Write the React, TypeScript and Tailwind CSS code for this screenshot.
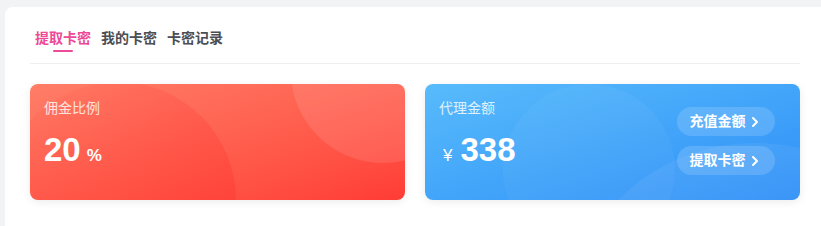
import { ChevronRight } from 'lucide-react';

const tabs = ['提取卡密', '我的卡密', '卡密记录'];

export default function App() {
  const active = 0;

  return (
    <div className="min-h-[226px] bg-[#f2f3f5] pt-[7px] pl-[5px] font-['Liberation_Sans','Noto_Sans_CJK_SC',sans-serif]">
      <div className="h-[219px] rounded-tl-lg bg-white pt-[21px] pl-[25px] pr-[21px]">
        {/* Tabs */}
        <div className="flex gap-[10px] border-b border-[#eeeff1] pl-[5px] pb-[11px]">
          {tabs.map((tab, i) => (
            <div key={tab} className="flex flex-col items-center">
              <span
                className={
                  i === active
                    ? 'text-[14px] leading-5 font-bold text-[#ec4a96]'
                    : 'text-[14px] leading-5 font-bold text-[#4b4e55]'
                }
              >
                {tab}
              </span>
              <span
                className={
                  i === active
                    ? 'mt-[2px] h-[2px] w-5 rounded-full bg-[#ec4a96]'
                    : 'mt-[2px] h-[2px] w-5'
                }
              />
            </div>
          ))}
        </div>

        {/* Cards */}
        <div className="mt-5 grid grid-cols-2 gap-5">
          {/* Commission */}
          <div className="relative h-[116px] overflow-hidden rounded-lg bg-gradient-to-br from-[#ff7d67] to-[#ff3b36] shadow-[0_2px_8px_rgba(0,0,0,0.08)]">
            <div className="absolute left-[-30px] top-[-2px] h-[236px] w-[236px] rounded-full bg-gradient-to-br from-[#ff4a40]/0 to-[#ff2a2a]/40" />
            <div className="absolute left-[261px] top-[-105px] h-[184px] w-[184px] rounded-full bg-white/10" />
            <div className="relative px-[14px] pt-[15px]">
              <p className="text-[14px] leading-[18px] text-white/80">佣金比例</p>
              <div className="mt-[15px] flex items-baseline text-white">
                <span className="text-[33px] leading-[36px] font-bold">20</span>
                <span className="ml-[6px] text-[17px] font-bold">%</span>
              </div>
            </div>
          </div>

          {/* Agent balance */}
          <div className="relative flex h-[116px] items-stretch justify-between overflow-hidden rounded-lg bg-gradient-to-br from-[#58bbfb] to-[#2f8ff7] shadow-[0_2px_8px_rgba(0,0,0,0.08)]">
            <div className="absolute left-[78px] top-0 h-[172px] w-[172px] rounded-full bg-white/[0.04]" />
            <div className="absolute left-[137px] top-[59px] h-[386px] w-[386px] rounded-full bg-white/[0.06]" />
            <div className="relative px-[14px] pt-[15px]">
              <p className="text-[14px] leading-[18px] text-white/80">代理金额</p>
              <div className="mt-[15px] flex items-baseline text-white">
                <span className="ml-[4px] text-[17px]">¥</span>
                <span className="ml-[8px] text-[33px] leading-[36px] font-bold">338</span>
              </div>
            </div>
            <div className="relative flex flex-col gap-[10px] pr-[25px] pt-[23px]">
              {['充值金额', '提取卡密'].map((label) => (
                <button
                  key={label}
                  className="flex h-[29px] w-[98px] items-center justify-center rounded-full bg-white/15 text-[14px] font-bold text-white"
                >
                  {label}
                  <ChevronRight className="ml-[1px] h-4 w-4" strokeWidth={3} />
                </button>
              ))}
            </div>
          </div>
        </div>
      </div>
    </div>
  );
}
